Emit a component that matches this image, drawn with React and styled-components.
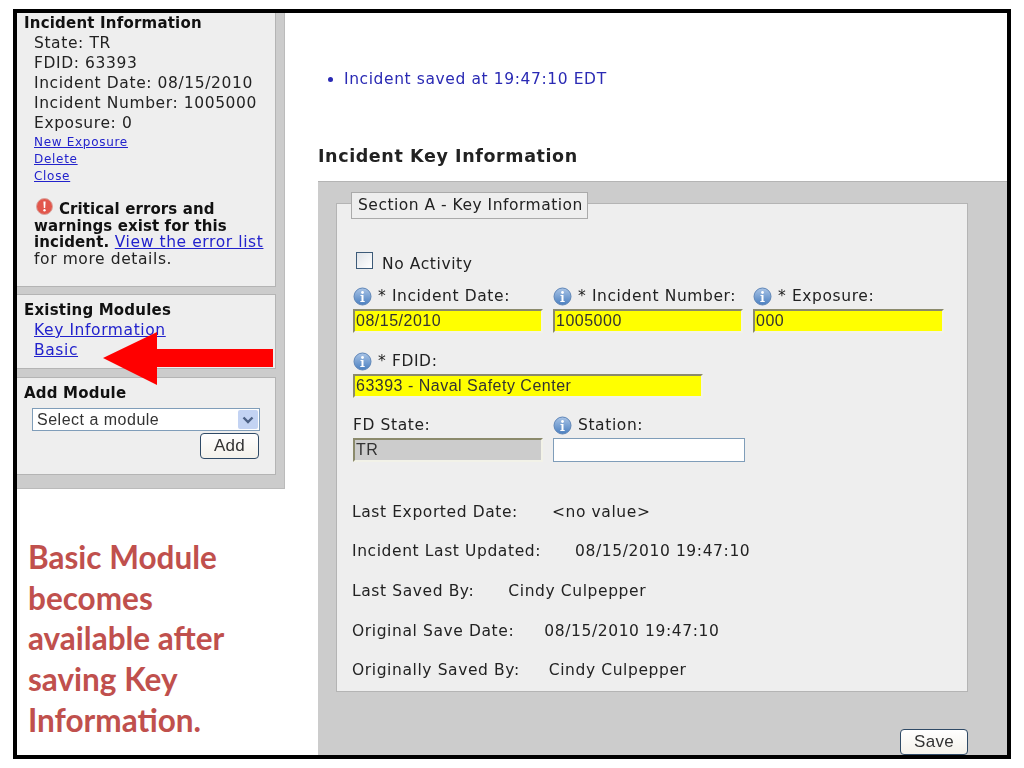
import React from 'react';
import styled, { createGlobalStyle, css } from 'styled-components';

const Global = createGlobalStyle`
    html, body { margin: 0; padding: 0; background: #fff; }
    body { font-family: "DejaVu Sans", Verdana, sans-serif; color: #222; }
    * { box-sizing: border-box; }
`;

// the screenshot's text is wider than DejaVu at the same height
const bodyText = css`
    font-size: 15.5px;
    letter-spacing: .6px;
`;

const boldText = css`
    font-size: 15px;
    letter-spacing: .2px;
    font-weight: bold;
    color: #111;
`;

const formFont = css`
    font-family: "Liberation Sans", Arial, sans-serif;
    font-size: 16px;
    letter-spacing: .5px;
    color: #333;
`;

// the reference is a resampled screenshot, a touch soft everywhere
const soft = css`
    filter: blur(.35px);
`;

const Frame = styled.div`
    position: relative;
    display: flex;
    margin: 9px 0 0 13px;
    width: 998px;
    height: 750px;
    border: 4px solid #000;
    background: #fff;
    overflow: hidden;
`;

const Sidebar = styled.aside`
    flex: 0 0 268px;
    display: flex;
    flex-direction: column;
`;

const PanelStack = styled.div`
    height: 476px;
    padding-right: 8px;
    background: #ccc;
    border-right: 1px solid #bbb;
    border-bottom: 1px solid #bbb;
    ${soft}
`;

const Panel = styled.section`
    height: ${p => p.$height}px;
    margin-bottom: ${p => p.$gap || 0}px;
    padding: ${p => p.$top || 0}px 0 0 7px;
    background: #eee;
    border: 1px solid #b4b4b4;
    border-left: 0;
    border-top: ${p => p.$flush ? 0 : '1px solid #b4b4b4'};
`;

const PanelTitle = styled.h3`
    margin: 0;
    line-height: 19px;
    padding-top: 1px;
    ${boldText}
`;

const Item = styled.div`
    padding-left: 10px;
    line-height: 20px;
    white-space: nowrap;
    ${bodyText}
`;

const Link = styled.a`
    color: #2222cc;
    text-decoration: underline;
`;

const SmallLinks = styled.div`
    padding-top: 1px;
`;

const SmallLink = styled(Link)`
    display: block;
    margin-left: 10px;
    font-size: 12px;
    letter-spacing: .7px;
    line-height: 17px;
`;

const Warning = styled.p`
    margin: 13px 0 0 10px;
    line-height: 16.5px;
    ${bodyText}
    svg { vertical-align: -1px; margin: 0 6px 0 2px; }
    b { ${boldText} letter-spacing: .1px; }
`;

const SelectBox = styled.div`
    display: flex;
    align-items: center;
    justify-content: space-between;
    width: 228px;
    height: 23px;
    margin: 5px 0 0 8px;
    padding: 0 1px 0 4px;
    background: #fff;
    border: 1px solid #7f9db9;
    ${formFont}
`;

const SelectArrow = styled.span`
    display: flex;
    align-items: center;
    justify-content: center;
    width: 20px;
    height: 19px;
    background: #c3d3f3;
    border-radius: 2px;
`;

const Button = styled.button`
    display: block;
    height: 26px;
    padding: 0;
    width: ${p => p.$width}px;
    margin: ${p => p.$top || 0}px ${p => p.$right || 0}px 0 auto;
    background: linear-gradient(#fff, #f3f1ea);
    border: 1px solid #2f4a66;
    border-radius: 4px;
    font-family: "Liberation Sans", Arial, sans-serif;
    font-size: 17px;
    letter-spacing: .3px;
    color: #333;
`;

const Caption = styled.p`
    margin: 48px 0 0;
    padding-left: 11px;
    width: 240px;
    font-family: Lato, "Liberation Sans", sans-serif;
    font-weight: bold;
    font-size: 31.5px;
    line-height: 40.7px;
    color: #c0504d;
`;

const Main = styled.main`
    flex: 1;
    display: flex;
    flex-direction: column;
    min-width: 0;
    ${soft}
`;

const Notice = styled.ul`
    margin: 56px 0 0;
    padding: 0 0 0 59px;
    line-height: 20px;
    color: #2a2ab4;
    ${bodyText}
`;

const Heading = styled.h2`
    margin: 56px 0 0 33px;
    font-size: 17.5px;
    letter-spacing: .6px;
    line-height: 22px;
    color: #222;
`;

const FormArea = styled.div`
    flex: 1;
    margin: 14px 0 0 33px;
    padding: 10px 39px 0 18px;
    background: #ccc;
    border-top: 1px solid #b4b4b4;
    overflow: hidden;
`;

const Fields = styled.fieldset`
    height: 500px;
    margin: 0;
    padding: 0 0 0 16px;
    background: #eee;
    border: 1px solid #b4b4b4;
`;

const Legend = styled.legend`
    margin-left: -2px;
    padding: 0;
    height: 23px;
`;

const LegendBox = styled.span`
    display: block;
    height: 27px;
    padding: 0 4px 0 6px;
    line-height: 25px;
    background: #eee;
    border: 1px solid #aaa;
    ${bodyText}
    letter-spacing: .5px;
`;

const CheckRow = styled.label`
    display: flex;
    align-items: center;
    gap: 9px;
    margin: 37px 0 0 3px;
    line-height: 20px;
    ${bodyText}
`;

const CheckBox = styled.span`
    width: 17px;
    height: 17px;
    margin-bottom: 6px;
    background: linear-gradient(135deg, #dfe3e8, #fff);
    border: 1px solid #3c5a78;
`;

const Row = styled.div`
    display: flex;
    gap: 10px;
    margin-top: ${p => p.$top}px;
`;

const Field = styled.div`
    width: ${p => p.$width}px;
`;

const Label = styled.div`
    display: flex;
    align-items: center;
    gap: 6px;
    height: 20px;
    margin-bottom: 3px;
    white-space: nowrap;
    ${bodyText}
`;

const Input = styled.input`
    display: block;
    width: 100%;
    height: 24px;
    padding: 0 0 0 1px;
    outline: 0;
    background: ${p => p.$bg};
    border-style: solid;
    border-color: ${p => p.$plain ? '#7f9db9' : '#8b8a6c #f2f2e8 #f2f2e8 #8b8a6c'};
    border-width: ${p => p.$plain ? '1px' : '2px'};
    ${formFont}
`;

const Info = styled.div`
    margin: ${p => p.$top}px 0 0 -1px;
    line-height: 20px;
    white-space: pre;
    ${bodyText}
    span { margin-left: ${p => p.$gap}px; }
`;

const SaveRow = styled.div`
    margin-top: 37px;
`;

const Arrow = styled.svg`
    position: absolute;
    left: 0;
    top: 0;
    pointer-events: none;
`;

const InfoIcon = () => (
    <svg width="19" height="19" viewBox="0 0 19 19">
        <defs>
            <linearGradient id="ig" x1="0" y1="0" x2="0" y2="1">
                <stop offset="0" stopColor="#a9c4e6" />
                <stop offset="1" stopColor="#4a7fc0" />
            </linearGradient>
        </defs>
        <circle cx="9.5" cy="9.5" r="8.5" fill="url(#ig)" stroke="#5f86b8" />
        <circle cx="9.5" cy="5.5" r="1.4" fill="#fff" />
        <path d="M7.5 8h3v6h1.2v1H7.3v-1h1.2V9H7.5z" fill="#fff" />
    </svg>
);

const ErrorIcon = () => (
    <svg width="17" height="17" viewBox="0 0 17 17">
        <circle cx="8.5" cy="8.5" r="8" fill="#e2574c" stroke="#d9a59f" />
        <path d="M7.4 3.5h2.2l-.4 6.5H7.8z" fill="#fff" />
        <circle cx="8.5" cy="12.3" r="1.2" fill="#fff" />
    </svg>
);

const Chevron = () => (
    <svg width="12" height="8" viewBox="0 0 12 8">
        <path d="M1.5 1.5L6 6l4.5-4.5" fill="none" stroke="#4d6185" strokeWidth="2.4" />
    </svg>
);

const FormField = ({ width, label, value, bg, icon = true, plain }) => (
    <Field $width={width}>
        <Label>
            {icon && <InfoIcon />}
            {label}
        </Label>
        <Input readOnly value={value} $bg={bg} $plain={plain} />
    </Field>
);

const App = () => (
    <>
        <Global />
        <Frame>
            <Sidebar>
                <PanelStack>
                    <Panel $height={274} $gap={7} $flush>
                        <PanelTitle>Incident Information</PanelTitle>
                        <Item>State: TR</Item>
                        <Item>FDID: 63393</Item>
                        <Item>Incident Date: 08/15/2010</Item>
                        <Item>Incident Number: 1005000</Item>
                        <Item>Exposure: 0</Item>
                        <SmallLinks>
                            <SmallLink>New Exposure</SmallLink>
                            <SmallLink>Delete</SmallLink>
                            <SmallLink>Close</SmallLink>
                        </SmallLinks>
                        <Warning>
                            <ErrorIcon />
                            <b>Critical errors and warnings exist for this incident.</b> <Link>View the error list</Link> for more details.
                        </Warning>
                    </Panel>
                    <Panel $height={75} $gap={8} $top={5}>
                        <PanelTitle>Existing Modules</PanelTitle>
                        <Item><Link>Key Information</Link></Item>
                        <Item><Link>Basic</Link></Item>
                    </Panel>
                    <Panel $height={98} $top={5}>
                        <PanelTitle>Add Module</PanelTitle>
                        <SelectBox>
                            Select a module
                            <SelectArrow><Chevron /></SelectArrow>
                        </SelectBox>
                        <Button $width={59} $right={16} $top={2}>Add</Button>
                    </Panel>
                </PanelStack>
                <Caption>Basic Module becomes available after saving Key Information.</Caption>
            </Sidebar>
            <Main>
                <Notice><li>Incident saved at 19:47:10 EDT</li></Notice>
                <Heading>Incident Key Information</Heading>
                <FormArea>
                    <Fields>
                        <Legend><LegendBox>Section A - Key Information</LegendBox></Legend>
                        <CheckRow><CheckBox />No Activity</CheckRow>
                        <Row $top={11}>
                            <FormField width={190} label="* Incident Date:" value="08/15/2010" bg="#ffff00" />
                            <FormField width={190} label="* Incident Number:" value="1005000" bg="#ffff00" />
                            <FormField width={191} label="* Exposure:" value="000" bg="#ffff00" />
                        </Row>
                        <Row $top={18}>
                            <FormField width={350} label="* FDID:" value="63393 - Naval Safety Center" bg="#ffff00" />
                        </Row>
                        <Row $top={17}>
                            <FormField width={190} icon={false} label="FD State:" value="TR" bg="#ccc" />
                            <FormField width={192} label="Station:" value="" bg="#fff" plain />
                        </Row>
                        <Info $top={40} $gap={34}>Last Exported Date:<span>&lt;no value&gt;</span></Info>
                        <Info $top={19} $gap={34}>Incident Last Updated:<span>08/15/2010 19:47:10</span></Info>
                        <Info $top={20} $gap={34}>Last Saved By:<span>Cindy Culpepper</span></Info>
                        <Info $top={20} $gap={30}>Original Save Date:<span>08/15/2010 19:47:10</span></Info>
                        <Info $top={19} $gap={29}>Originally Saved By:<span>Cindy Culpepper</span></Info>
                    </Fields>
                    <SaveRow><Button $width={68}>Save</Button></SaveRow>
                </FormArea>
            </Main>
            <Arrow width="276" height="400">
                <path d="M86 345 L140 319 L140 336 L256 336 L256 354 L140 354 L140 372 Z" fill="#ff0000" />
            </Arrow>
        </Frame>
    </>
);

export default App;
